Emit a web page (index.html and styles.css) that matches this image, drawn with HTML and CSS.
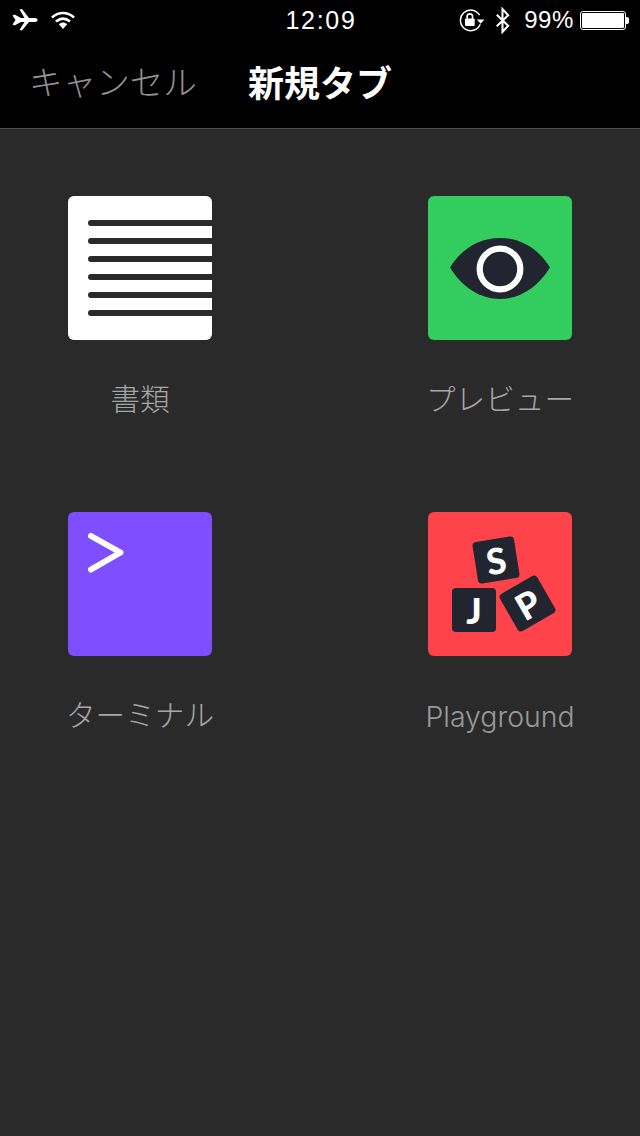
FILE: index.html
```html
<!DOCTYPE html>
<html lang="ja">
<head>
<meta charset="utf-8">
<title>新規タブ</title>
<link rel="stylesheet" href="styles.css">
</head>
<body>
<header class="top">
  <div class="status">
    <div class="status-left">
      <svg class="i-plane" viewBox="0 0 26 24" width="26" height="24"><path fill="#fff" d="M0.5 7.5 L2.5 6.5 L9 10 L12.5 10 L7.5 1.5 L10 1 L17 10 L23 10 C25 10 25.5 11.2 25.5 12 C25.5 12.8 25 14 23 14 L17 14 L10 22.5 L7.5 22 L12.5 14 L9 14 L2.5 17.5 L0.5 16.5 L3.5 12 Z"/></svg>
      <svg class="i-wifi" viewBox="0 0 26 20" width="26" height="20"><g fill="none" stroke="#fff" stroke-width="2.6"><path d="M2 7.5 C8.5 1.5 17.5 1.5 24 7.5"/><path d="M6 11.5 C10.5 7.7 15.5 7.7 20 11.5"/></g><path fill="#fff" d="M8.8 14.3 C11.5 12 14.5 12 17.2 14.3 L13 19 Z"/></svg>
    </div>
    <div class="clock">12:09</div>
    <div class="status-right">
      <svg class="i-lock" viewBox="0 0 24 22" width="26" height="24"><path fill="none" stroke="#fff" stroke-width="1.3" d="M19 6.5 A9.5 9.5 0 1 0 19.6 15"/><path fill="#fff" d="M16.5 10.5 L23.5 10.5 L20 14.5 Z"/><rect fill="#fff" x="5.5" y="9.5" width="9" height="7" rx="1"/><path fill="none" stroke="#fff" stroke-width="1.5" d="M7.5 10 V7.8 A2.5 2.5 0 0 1 12.5 7.8 V10"/></svg>
      <svg class="i-bt" viewBox="0 0 16 26" width="18" height="27"><path fill="none" stroke="#fff" stroke-width="2" d="M2 7.5 L13 18 L7.5 24 V2 L13 8 L2 18.5"/></svg>
      <span class="pct">99%</span>
      <div class="battery"><div class="battery-body"><div class="battery-fill"></div></div><div class="battery-tip"></div></div>
    </div>
  </div>
  <nav class="nav">
    <span class="cancel">キャンセル</span>
    <span class="title">新規タブ</span>
  </nav>
</header>
<main class="grid">
  <section class="cell">
    <div class="tile tile-doc">
      <span class="doc-line"></span><span class="doc-line"></span><span class="doc-line"></span><span class="doc-line"></span><span class="doc-line"></span><span class="doc-line"></span>
    </div>
    <div class="label">書類</div>
  </section>
  <section class="cell">
    <div class="tile tile-preview">
      <svg viewBox="0 0 144 144" width="144" height="144"><path fill="#22252f" d="M22 71.5 C34 52 52 42 72 42 C92 42 110 52 122 71.5 C110 91 92 103 72 103 C52 103 34 91 22 71.5 Z"/><circle cx="72" cy="73" r="20.3" fill="#22252f" stroke="#fff" stroke-width="6.2"/></svg>
    </div>
    <div class="label">プレビュー</div>
  </section>
  <section class="cell">
    <div class="tile tile-term">
      <svg viewBox="0 0 144 144" width="144" height="144"><path fill="none" stroke="#fff" stroke-width="6" stroke-linecap="round" stroke-linejoin="round" d="M23 24 L52.5 40.5 L23 57.5"/></svg>
    </div>
    <div class="label">ターミナル</div>
  </section>
  <section class="cell">
    <div class="tile tile-play">
      <div class="block block-s">S</div>
      <div class="block block-j">J</div>
      <div class="block block-p">P</div>
    </div>
    <div class="label label-latin">Playground</div>
  </section>
</main>
</body>
</html>
```
FILE: styles.css
```css
* { box-sizing: border-box; }
html, body { margin: 0; padding: 0; }
body {
  width: 640px;
  height: 1136px;
  overflow: hidden;
  background: #2a2a2a;
  font-family: "Noto Sans CJK JP", "Liberation Sans", sans-serif;
}
.top {
  height: 129px;
  background: #000;
  border-bottom: 1px solid #4c4c4c;
  color: #fff;
}
.status {
  height: 40px;
  padding: 0 11px 0 12px;
  display: flex;
  align-items: center;
  justify-content: space-between;
  position: relative;
}
.status-left, .status-right { display: flex; align-items: center; }
.status-left { gap: 12px; }
.status-right { gap: 9px; }
.clock {
  position: absolute;
  left: 2px;
  right: 0;
  text-align: center;
  font: 25px "Liberation Sans", sans-serif;
  letter-spacing: 1.7px;
}
.pct { font: 24px "Liberation Sans", sans-serif; letter-spacing: 0.6px; margin: 0 -3px 0 3px; }
.battery { display: flex; align-items: center; }
.battery-body {
  width: 46px;
  height: 19px;
  border: 1px solid #fff;
  border-radius: 3px;
  padding: 1px;
}
.battery-fill { width: 100%; height: 100%; background: #fff; border-radius: 1px; }
.battery-tip { width: 3px; height: 7px; background: #fff; border-radius: 0 2px 2px 0; }
.nav {
  height: 88px;
  padding: 0 0 7px 29px;
  display: flex;
  align-items: center;
  gap: 51px;
}
.cancel { font-size: 33.6px; color: #929292; font-weight: 300; }
.title { font-size: 36px; font-weight: 700; }
.grid {
  padding: 67px 60px 0;
  display: grid;
  grid-template-columns: 160px 160px;
  justify-content: space-between;
  row-gap: 92px;
}
.cell { display: flex; flex-direction: column; align-items: center; }
.tile { width: 144px; height: 144px; border-radius: 6px; overflow: hidden; position: relative; }
.label {
  margin-top: 36px;
  height: 44px;
  line-height: 44px;
  font-size: 29.6px;
  font-weight: 300;
  color: #a6a6a6;
  white-space: nowrap;
}
.label-latin { font: 28.4px/44px Inter, sans-serif; font-weight: 300; color: #999; margin-top: 39px; height: 41px; }
.tile-doc {
  background: #fff;
  padding: 24px 0 0 20px;
  display: flex;
  flex-direction: column;
  gap: 12px;
}
.doc-line { display: block; height: 6px; background: #2a2a2a; border-radius: 3px 0 0 3px; }
.tile-preview { background: #33cc5f; }
.tile-term { background: #7f4fff; }
.tile-play { background: #ff434b; }
.block {
  position: absolute;
  background: #22252f;
  border-radius: 4px;
  color: #fff;
  font: 900 36px Lato, sans-serif;
  display: flex;
  align-items: center;
  justify-content: center;
}
.block-s { left: 47px; top: 27px; width: 42px; height: 42px; transform: rotate(-9deg); }
.block-j { left: 24px; top: 76px; width: 44px; height: 44px; }
.block-p { left: 78px; top: 70px; width: 43px; height: 43px; transform: rotate(-30deg); }
```
